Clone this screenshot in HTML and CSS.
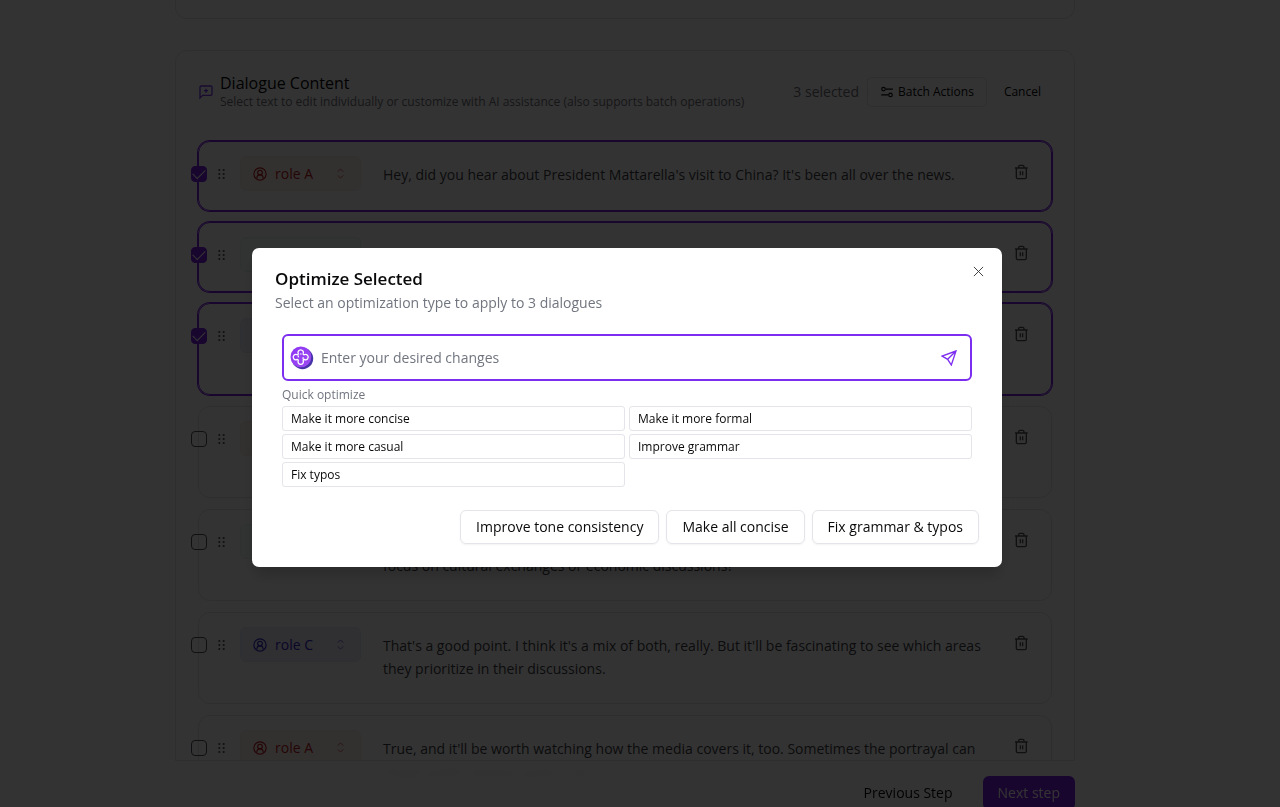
FILE: index.html
```html
<!DOCTYPE html>
<html lang="en">
<head>
<meta charset="utf-8">
<meta name="viewport" content="width=device-width, initial-scale=1">
<title>Dialogue Content</title>
<link rel="stylesheet" href="styles.css">
</head>
<body>
<svg class="sprite" aria-hidden="true">
  <symbol id="user" viewBox="0 0 24 24"><circle cx="12" cy="12" r="10.500"/><circle cx="12" cy="9.500" r="4"/><path d="M6.500 20c0-4 2.500-6.500 5.500-6.500s5.500 2.500 5.500 6.500"/></symbol>
  <symbol id="updown" viewBox="0 0 24 24"><path d="m6 8 6-6 6 6M6 16l6 6 6-6"/></symbol>
  <symbol id="grip" viewBox="0 0 8 12"><circle cx="1.500" cy="1.500" r="1.200"/><circle cx="6.500" cy="1.500" r="1.200"/><circle cx="1.500" cy="6" r="1.200"/><circle cx="6.500" cy="6" r="1.200"/><circle cx="1.500" cy="10.500" r="1.200"/><circle cx="6.500" cy="10.500" r="1.200"/></symbol>
  <symbol id="trash" viewBox="0 0 24 24"><path d="M3 6h19M20 6v14c0 1-1 2-2 2H7c-1 0-2-1-2-2V6M8.500 6V4c0-1 1-2 2-2h4c1 0 2 1 2 2v2M11 11v6M14.500 11v6"/></symbol>
</svg>

<div class="page">
  <div class="container">
    <section class="card card-prev"></section>
    <section class="card">
      <header class="card-head">
        <svg class="head-icon" viewBox="0 0 24 24"><path d="M21 15a2 2 0 0 1-2 2H7l-4 4V5a2 2 0 0 1 2-2h14a2 2 0 0 1 2 2zM12 7v6M9 10h6"/></svg>
        <div class="head-text">
          <h2>Dialogue Content</h2>
          <p>Select text to edit individually or customize with AI assistance (also supports batch operations)</p>
        </div>
        <span class="count">3 selected</span>
        <button class="batch"><svg viewBox="0 0 24 24"><circle cx="6" cy="7" r="3"/><circle cx="18" cy="17" r="3"/><path d="M10 7h12M2 17h12"/></svg>Batch Actions</button>
        <button class="cancel">Cancel</button>
      </header>

      <div class="rows">
        <article class="row selected">
          <input type="checkbox" aria-label="Select dialogue 1" checked>
          <svg class="grip"><use href="#grip"/></svg>
          <button class="role role-a"><svg class="user"><use href="#user"/></svg><span>role A</span><svg class="updown"><use href="#updown"/></svg></button>
          <p>Hey, did you hear about President Mattarella's visit to China? It's been all over the news.</p>
          <button class="delete" aria-label="Delete"><svg><use href="#trash"/></svg></button>
        </article>
        <article class="row selected">
          <input type="checkbox" aria-label="Select dialogue 2" checked>
          <svg class="grip"><use href="#grip"/></svg>
          <button class="role role-b" aria-label="role B"></button>
          <p></p>
          <button class="delete" aria-label="Delete"><svg><use href="#trash"/></svg></button>
        </article>
        <article class="row tall selected">
          <input type="checkbox" aria-label="Select dialogue 3" checked>
          <svg class="grip"><use href="#grip"/></svg>
          <button class="role role-c" aria-label="role C"></button>
          <p></p>
          <button class="delete" aria-label="Delete"><svg><use href="#trash"/></svg></button>
        </article>
        <article class="row tall">
          <input type="checkbox" aria-label="Select dialogue 4">
          <svg class="grip"><use href="#grip"/></svg>
          <button class="role role-a" aria-label="role A"></button>
          <p></p>
          <button class="delete" aria-label="Delete"><svg><use href="#trash"/></svg></button>
        </article>
        <article class="row tall">
          <input type="checkbox" aria-label="Select dialogue 5">
          <svg class="grip"><use href="#grip"/></svg>
          <button class="role role-b" aria-label="role B"></button>
          <p><br>focus on cultural exchanges or economic discussions?</p>
          <button class="delete" aria-label="Delete"><svg><use href="#trash"/></svg></button>
        </article>
        <article class="row tall">
          <input type="checkbox" aria-label="Select dialogue 6">
          <svg class="grip"><use href="#grip"/></svg>
          <button class="role role-c"><svg class="user"><use href="#user"/></svg><span>role C</span><svg class="updown"><use href="#updown"/></svg></button>
          <p>That's a good point. I think it's a mix of both, really. But it'll be fascinating to see which areas they prioritize in their discussions.</p>
          <button class="delete" aria-label="Delete"><svg><use href="#trash"/></svg></button>
        </article>
        <article class="row tall">
          <input type="checkbox" aria-label="Select dialogue 7">
          <svg class="grip"><use href="#grip"/></svg>
          <button class="role role-a"><svg class="user"><use href="#user"/></svg><span>role A</span><svg class="updown"><use href="#updown"/></svg></button>
          <p>True, and it'll be worth watching how the media covers it, too. Sometimes the portrayal can shape public opinion quite a lot.</p>
          <button class="delete" aria-label="Delete"><svg><use href="#trash"/></svg></button>
        </article>
      </div>
    </section>

    <footer class="steps">
      <button class="prev">Previous Step</button>
      <button class="next">Next step</button>
    </footer>
  </div>
</div>

<div class="overlay">
  <div class="modal" role="dialog" aria-labelledby="modal-title">
    <button class="close" aria-label="Close"><svg viewBox="0 0 12 12"><path d="m1 1 10 10M11 1 1 11"/></svg></button>
    <h1 id="modal-title">Optimize Selected</h1>
    <p class="lead">Select an optimization type to apply to 3 dialogues</p>
    <div class="body">
      <div class="prompt">
        <svg class="logo" viewBox="0 0 24 24">
          <defs><linearGradient id="face" x1="0" y1="0" x2="1" y2="1"><stop offset="0" stop-color="#8b34f5"/><stop offset="1" stop-color="#a04df0"/></linearGradient></defs>
          <circle cx="12.500" cy="12.500" r="10.700" fill="#4733a8"/>
          <circle cx="10.900" cy="10.900" r="10.400" fill="url(#face)"/>
          <path d="M8.300 7.800a2.700 2.700 0 1 1 4.800 0c0 .8.300 1 1 1a2.700 2.700 0 1 1 0 4.600c-.7 0-1 .3-1 1a2.700 2.700 0 1 1-4.800 0c0-.7-.3-1-1-1a2.700 2.700 0 1 1 0-4.600c.7 0 1-.2 1-1z" fill="none" stroke="#fff" stroke-width="1.300" stroke-linecap="round"/>
          <path d="M8.300 9.800v1.200M13.100 11.500v1.200M10.300 8h.8" fill="none" stroke="#fff" stroke-width="1.200" stroke-linecap="round"/>
        </svg>
        <input type="text" placeholder="Enter your desired changes" aria-label="Enter your desired changes">
        <button class="send" aria-label="Send"><svg viewBox="0 0 24 24"><path d="M22.500 1.500 1.500 9l8.500 5 5.500 8.500zM22.500 1.500 10 14"/></svg></button>
      </div>
      <p class="label">Quick optimize</p>
      <div class="quick">
        <button>Make it more concise</button>
        <button>Make it more formal</button>
        <button>Make it more casual</button>
        <button>Improve grammar</button>
        <button>Fix typos</button>
      </div>
    </div>
    <div class="actions">
      <button>Improve tone consistency</button>
      <button>Make all concise</button>
      <button>Fix grammar &amp; typos</button>
    </div>
  </div>
</div>
</body>
</html>
```

FILE: styles.css
```css
* { box-sizing: border-box; }
body {
  margin: 0;
  background: #fff;
  color: #09090b;
  font: 14px/20px "Open Sans", "Noto Sans", sans-serif;
  overflow: hidden;
}
h1, h2, p { margin: 0; }
button, input { font: inherit; color: inherit; }
button { border: 0; padding: 0; background: none; white-space: nowrap; }
svg { fill: none; stroke: currentColor; stroke-width: 2; flex: none; }
.sprite { display: none; }

.page { height: 100vh; padding-right: 30px; overflow: hidden; }
.container { position: relative; max-width: 900px; height: 100%; margin: 0 auto; overflow: hidden; }
.card {
  padding: 22px;
  border: 1px solid #e4e4e7;
  border-radius: 12px;
  background: #fff;
}
.card-prev { height: 19px; margin-bottom: 31px; padding: 0; border-top: 0; border-radius: 0 0 12px 12px; }

.card-head { display: flex; align-items: center; margin-bottom: 31px; }
.head-icon { width: 16px; height: 16px; margin-right: 6px; color: #7c3aed; }
.head-text { flex: 1; }
.head-text h2 { font-size: 16px; font-weight: 400; line-height: 20px; }
.head-text p { font-size: 12px; line-height: 17px; color: #71717a; }
.count { color: #71717a; margin-right: 8px; }
.batch {
  display: flex;
  align-items: center;
  gap: 4px;
  height: 30px;
  padding: 0 12px;
  border: 1px solid #e4e4e7;
  border-radius: 5px;
  font-size: 12px;
}
.batch svg { width: 14px; height: 14px; }
.cancel { padding: 0 11px 0 17px; font-size: 12px; }

.rows { display: grid; gap: 11px; }
.row {
  display: flex;
  align-items: flex-start;
  min-height: 70px;
  padding-right: 21px;
  border: 1px solid #e4e4e7;
  border-radius: 12px;
}
.tall { min-height: 92px; }
.selected { border-color: #7c22e8; box-shadow: 0 0 0 1px #7c22e8; }
.row input {
  appearance: none;
  width: 16px;
  height: 16px;
  margin: 24px 11px 0 -8px;
  border: 1px solid #52525b;
  border-radius: 4px;
  flex: none;
}
.row input:checked {
  display: grid;
  place-items: center;
  border-color: #7c22e8;
  background: #7c22e8;
}
.row input:checked::before {
  content: "";
  width: 11px;
  height: 6px;
  margin-bottom: 3px;
  border: solid #fff;
  border-width: 0 0 1px 1px;
  transform: rotate(-45deg);
}
.grip { width: 7px; height: 12px; margin: 26px 15px 0 0; fill: #52525b; stroke: none; }
.role {
  display: flex;
  align-items: center;
  width: 121px;
  height: 35px;
  margin: 14px 22px 0 0;
  padding: 0 14px 0 12px;
  border: 1px solid;
  border-radius: 6px;
  flex: none;
}
.role span { flex: 1; text-align: left; margin-left: 8px; }
.role .user { width: 14px; height: 14px; }
.role .updown { width: 11px; height: 11px; opacity: 0.7; }
.role-a { color: #b91c1c; background: #fef2f0; border-color: #fbeaea; }
.role-b { color: #15803d; background: #f0fdf4; border-color: #e3f6e8; }
.role-c { color: #3423c4; background: #eef0fd; border-color: #e6e8fa; }
.row p { flex: 1; padding: 21px 0; line-height: 23px; color: #3f3f46; }
.delete { width: 18px; height: 16px; margin: 22px 0 0 30px; color: #52525b; display: grid; place-items: center; }
.delete svg { width: 16px; height: 16px; }

.steps {
  position: absolute;
  inset: auto 0 0;
  display: flex;
  justify-content: flex-end;
  gap: 30px;
  padding-top: 15px;
  border-top: 1px solid #e4e4e7;
  background: rgba(255, 255, 255, 0.9);
  backdrop-filter: blur(4px);
}
.steps button { height: 34px; margin-bottom: -3px; }
.steps .next { padding: 0 15px; border-radius: 6px; background: #7c22e8; color: #fff; font-weight: 500; }

.overlay {
  position: fixed;
  inset: 0;
  display: grid;
  place-items: center;
  padding: 8px 26px 0 0;
  background: rgba(0, 0, 0, 0.8);
}
.modal {
  position: relative;
  width: 100%;
  max-width: 750px;
  padding: 23px;
  border-radius: 7px;
  background: #fff;
  box-shadow: 0 10px 15px -3px rgba(0, 0, 0, 0.2);
}
.modal h1 { font-size: 17px; font-weight: 600; line-height: 16px; }
.lead { margin-top: 6px; color: #71757f; }
.close { position: absolute; top: 18px; right: 18px; width: 11px; height: 11px; color: #333; display: grid; }
.close svg { width: 11px; height: 11px; stroke-width: 1; }
.body { margin-top: 21px; padding: 0 7px; }
.prompt {
  display: flex;
  align-items: center;
  height: 47px;
  padding: 0 13px 0 6px;
  border: 2px solid #7c2df0;
  border-radius: 6px;
}
.logo { width: 24px; height: 24px; stroke: none; }
.prompt input { flex: 1; min-width: 0; margin-left: 7px; padding: 0; border: 0; outline: 0; background: none; }
.prompt input::placeholder { color: #71757f; opacity: 1; }
.send { display: grid; color: #7c2df0; }
.send svg { width: 16px; height: 16px; }
.label { margin: 6px 0 3px; font-size: 12px; line-height: 16px; color: #71757f; }
.quick { display: grid; grid-template-columns: 1fr 1fr; gap: 3px 4px; }
.quick button {
  height: 25px;
  padding: 0 8px;
  border: 1px solid #e4e4ea;
  border-radius: 3px;
  font-size: 12px;
  text-align: left;
}
.actions { display: flex; justify-content: flex-end; gap: 7px; margin-top: 23px; }
.actions button {
  height: 34px;
  padding: 0 15px;
  border: 1px solid #e4e4ea;
  border-radius: 6px;
  box-shadow: 0 1px 2px rgba(0, 0, 0, 0.05);
}
```
